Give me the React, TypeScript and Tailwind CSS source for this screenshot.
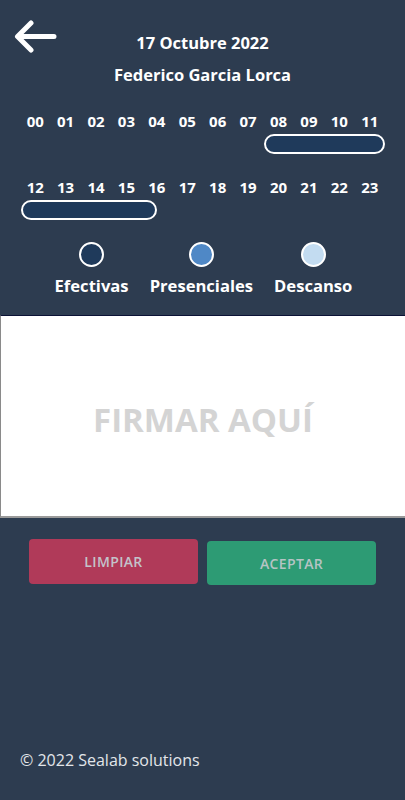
import React from 'react';

const HOURS_TOP = ['00', '01', '02', '03', '04', '05', '06', '07', '08', '09', '10', '11'];
const HOURS_BOTTOM = ['12', '13', '14', '15', '16', '17', '18', '19', '20', '21', '22', '23'];

const BackArrow = () => (
  <svg width="44" height="36" viewBox="0 0 44 36" fill="none">
    <path
      d="M40 17.5H4M17 4L3.5 17.5L17 31"
      stroke="white"
      strokeWidth="5"
      strokeLinecap="round"
      strokeLinejoin="round"
    />
  </svg>
);

const HourRow = ({ hours, pill }: { hours: string[]; pill: React.ReactNode }) => (
  <div className="px-5">
    <div className="grid grid-cols-12 text-center text-[15px] font-bold leading-5 text-white">
      {hours.map((h) => (
        <span key={h}>{h}</span>
      ))}
    </div>
    <div className="mt-[3px] h-5">{pill}</div>
  </div>
);

const Legend = ({ label, fill }: { label: string; fill: string }) => (
  <div className="flex flex-col items-center">
    <div className={`h-[25px] w-[25px] rounded-full border-2 border-white ${fill}`} />
    <span className="mt-[9px] text-[16.6px] font-bold leading-5 text-white">{label}</span>
  </div>
);

export default function App() {
  return (
    <div
      className="flex h-[800px] w-[405px] flex-col bg-[#2d3c50]"
      style={{ fontFamily: '"Open Sans", "Noto Sans", sans-serif' }}
    >
      <div className="relative pt-[33px]">
        <div className="absolute left-[14px] top-[19px]">
          <BackArrow />
        </div>
        <h1 className="text-center text-[16.5px] font-bold leading-5 text-white">17 Octubre 2022</h1>
        <h2 className="mt-3 text-center text-[16.5px] font-bold leading-5 text-white">
          Federico Garcia Lorca
        </h2>
      </div>

      <div className="mt-[26px]">
        <HourRow
          hours={HOURS_TOP}
          pill={
            <div className="ml-[244px] h-5 w-[121px] rounded-full border-2 border-white bg-[#1f3a5b]" />
          }
        />
        <div className="mt-[23px]">
          <HourRow
            hours={HOURS_BOTTOM}
            pill={<div className="ml-px h-5 w-[136px] rounded-full border-2 border-white bg-[#1f3a5b]" />}
          />
        </div>
      </div>

      <div className="mt-[22px] flex justify-center gap-[21px] pl-[2px]">
        <Legend label="Efectivas" fill="bg-[#1f3a5b]" />
        <Legend label="Presenciales" fill="bg-[#4f88c6]" />
        <Legend label="Descanso" fill="bg-[#c3dcf1]" />
      </div>

      <div className="mt-[19px] flex h-[203px] items-center justify-center border-t border-b-2 border-l border-t-[#0b1235] border-b-[#9a9a9a] border-l-[#8a8a8a] bg-white pt-2">
        <span className="text-[33px] font-bold text-[#d4d4d4]">FIRMAR AQUÍ</span>
      </div>

      <div className="mt-[21px] flex gap-[9px] px-[29px]">
        <button className="h-[45px] flex-1 rounded bg-[#b03a59] text-[14px] font-semibold tracking-wide text-[#c3c3cb]">
          LIMPIAR
        </button>
        <button className="mt-[2px] h-[44px] flex-1 rounded bg-[#2d9b74] text-[14px] font-semibold tracking-wide text-[#b5c4c4]">
          ACEPTAR
        </button>
      </div>

      <div className="mt-auto pb-[28px] pl-5 text-[16px] text-[#e3e6ea]">© 2022 Sealab solutions</div>
    </div>
  );
}
